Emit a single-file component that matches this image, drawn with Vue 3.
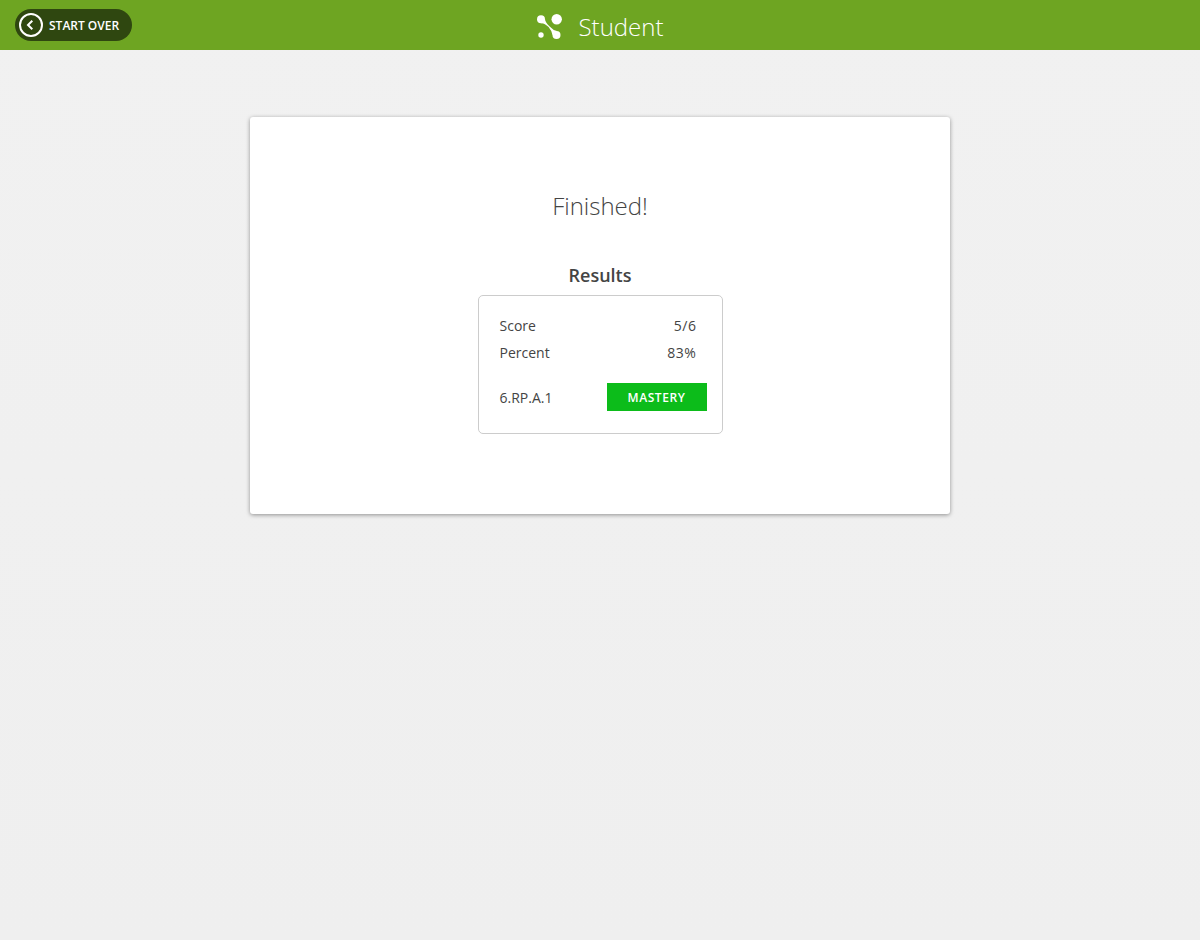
<script setup>
import { ref } from 'vue'

const results = ref([
  { label: 'Score', value: '5/6' },
  { label: 'Percent', value: '83%' },
])
const standard = { code: '6.RP.A.1', level: 'Mastery' }
</script>

<template>
  <div class="page">
    <header class="topbar">
      <button class="start-over" type="button">
        <svg class="back-icon" viewBox="0 0 24 24" aria-hidden="true">
          <circle cx="12" cy="12" r="11" />
          <path d="M13.300 7.800L9 12L13.300 16.200" />
        </svg>
        <span class="start-label">START OVER</span>
      </button>
      <div class="brand">
        <svg class="logo" viewBox="0 0 26 26" aria-hidden="true">
          <circle cx="4" cy="5.300" r="4" />
          <circle cx="19.700" cy="5.300" r="5.200" />
          <circle cx="4" cy="21" r="2.700" />
          <circle cx="19.500" cy="21" r="4" />
          <path d="M8 5Q8 7.800 12.400 12.300Q16.200 16.500 20 17L15.500 21Q15.200 17.500 11.600 13.100Q7.500 9 4 9.300Z" />
        </svg>
        <span class="brand-name">Student</span>
      </div>
    </header>
    <main class="card">
      <h1>Finished!</h1>
      <h2>Results</h2>
      <section class="results">
        <dl>
          <div v-for="row in results" :key="row.label" class="row">
            <dt>{{ row.label }}</dt>
            <dd>{{ row.value }}</dd>
          </div>
        </dl>
        <div class="standard">
          <span>{{ standard.code }}</span>
          <span class="badge">{{ standard.level }}</span>
        </div>
      </section>
    </main>
  </div>
</template>

<style>
body {
  background: #f0f0f0;
}
</style>

<style scoped>
.page {
  min-height: 100vh;
  background: linear-gradient(#f1f1f1, #efefef);
  font-family: "Open Sans", sans-serif;
  color: #444;
}
.topbar {
  display: grid;
  grid-template-columns: 1fr auto 1fr;
  align-items: center;
  height: 50px;
  padding: 0 15px;
  background: #6ea522;
}
.start-over {
  justify-self: start;
  display: flex;
  align-items: center;
  gap: 6px;
  height: 32px;
  padding: 0 13px 0 4px;
  border: 0;
  border-radius: 16px;
  background: #2f4710;
  color: #fff;
  font: 600 12px/30px "Open Sans", sans-serif;
  cursor: pointer;
}
.start-label {
  padding-top: 2px;
}
.back-icon {
  width: 24px;
  height: 24px;
  fill: none;
  stroke: #fff;
  stroke-width: 2;
}
.brand {
  display: flex;
  align-items: center;
  gap: 16px;
  padding-top: 4px;
  color: #fff;
}
.logo {
  width: 26px;
  height: 26px;
  fill: #fff;
}
.brand-name {
  font-size: 24px;
  font-weight: 300;
  line-height: 46px;
}
.card {
  box-sizing: border-box;
  max-width: 700px;
  margin: 67px auto 0;
  padding: 71px 20px 80px;
  border-radius: 3px;
  background: #fff;
  box-shadow: 0 1px 4px rgba(0, 0, 0, 0.4);
}
h1 {
  margin: 0;
  font-size: 24px;
  font-weight: 300;
  line-height: 36px;
  text-align: center;
}
h2 {
  margin: 37px 0 6px;
  font-size: 18px;
  font-weight: 600;
  line-height: 28px;
  text-align: center;
}
.results {
  box-sizing: border-box;
  max-width: 245px;
  margin: 0 auto;
  padding: 16px 15px 22px 21px;
  border: 1px solid #ccc;
  border-radius: 5px;
  font-size: 14px;
  line-height: 27px;
}
dl,
dd {
  margin: 0;
}
dd {
  letter-spacing: 0.04em;
}
.row {
  display: flex;
  justify-content: space-between;
  padding-right: 10px;
}
.standard {
  display: flex;
  align-items: center;
  justify-content: space-between;
  margin-top: 17px;
}
.badge {
  box-sizing: border-box;
  width: 100px;
  padding-top: 2px;
  background: #0cbc1a;
  color: #fff;
  font-size: 12px;
  font-weight: 600;
  line-height: 26px;
  letter-spacing: 0.05em;
  text-align: center;
  text-transform: uppercase;
}
</style>
